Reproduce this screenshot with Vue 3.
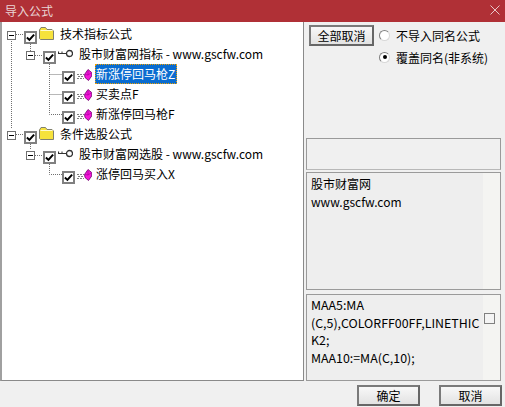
<script setup>
const rows = [
  { id: 1, depth: 0, icon: 'folder', expander: true, label: '技术指标公式' },
  { id: 2, depth: 1, icon: 'key', expander: true, label: '股市财富网指标 - www.gscfw.com' },
  { id: 3, depth: 2, icon: 'gem', label: '新涨停回马枪Z', selected: true },
  { id: 4, depth: 2, icon: 'gem', label: '买卖点F' },
  { id: 5, depth: 2, icon: 'gem', label: '新涨停回马枪F' },
  { id: 6, depth: 0, icon: 'folder', expander: true, label: '条件选股公式' },
  { id: 7, depth: 1, icon: 'key', expander: true, label: '股市财富网选股 - www.gscfw.com' },
  { id: 8, depth: 2, icon: 'gem', label: '涨停回马买入X' },
]
</script>

<template>
  <div class="win">
    <header class="title">
      <span>导入公式</span>
      <svg class="close" width="10" height="10" viewBox="0 0 10 10"><path d="M0.5 0.5L9.5 9.5M9.5 0.5L0.5 9.5" stroke="#e8c8c8" stroke-width="1" fill="none"/></svg>
    </header>
    <div class="main">
      <div class="tree">
        <svg class="lines" width="100" height="170" viewBox="0 0 100 170">
          <g stroke="#707070" stroke-dasharray="1 1" fill="none">
            <path d="M11.5 17V106"/>
            <path d="M16 12.5H24M16 112.5H24M35 33.5H43M35 133.5H43"/>
            <path d="M30.5 22V29M30.5 122V128"/>
            <path d="M49.5 42V92.5H62M49.5 52.5H62M49.5 72.5H62M49.5 142V152.5H62"/>
          </g>
        </svg>
        <div v-for="r in rows" :key="r.id" class="row" :class="'d' + r.depth">
          <span class="exp" v-if="r.expander"><i></i></span>
          <span class="chk">
            <svg width="10" height="9" viewBox="0 0 10 9"><path d="M1 4.5L3.8 7.2L9 1.2" stroke="#000" stroke-width="2.2" fill="none"/></svg>
          </span>
          <svg v-if="r.icon === 'folder'" class="ico folder" width="15" height="13" viewBox="0 0 15 13">
            <path d="M0.5 3L2 0.5H6.5L8 2.5H13L14.5 4V12.5H1.5L0.5 11.5Z" fill="#f6e23c" stroke="#808070"/>
            <path d="M1.5 3.5H13.5" stroke="#fffbd0"/>
          </svg>
          <svg v-else-if="r.icon === 'key'" class="ico key" width="15" height="9" viewBox="0 0 15 9">
            <circle cx="11.5" cy="4.5" r="3" fill="#fff" stroke="#333" stroke-width="1.3"/>
            <path d="M8.5 4.5H0.5V2.5" stroke="#333" stroke-width="1.2" fill="none"/>
            <path d="M4 4.5V2.5" stroke="#333" fill="none"/>
          </svg>
          <svg v-else class="ico gem" width="15" height="12" viewBox="0 0 15 12">
            <path d="M0 5.5H7M1 7.5H7M0 9.5H7" stroke="#808080" stroke-dasharray="2 1"/>
            <path d="M7.5 5.5L11 0.5L14.7 3.5V7L11.5 11.5L8 8.5Z" fill="#f418d8" stroke="#700070" stroke-width="0.8"/>
            <path d="M11 1.5V6M8 5.5L11 6L14 4" stroke="#b000a8" stroke-width="0.8" fill="none"/>
          </svg>
          <span class="label" :class="{ sel: r.selected }">{{ r.label }}</span>
        </div>
      </div>
      <aside class="side">
        <div class="opts">
          <button class="btn all">全部取消</button>
          <div class="radios">
            <label class="radio"><span class="dot"></span>不导入同名公式</label>
            <label class="radio"><span class="dot on"></span>覆盖同名(非系统)</label>
          </div>
        </div>
        <div class="box empty"></div>
        <div class="box info">股市财富网<br>www.gscfw.com</div>
        <div class="box code">
          <div class="code-text">MAA5:MA<br>(C,5),COLORFF00FF,LINETHIC<br>K2;<br>MAA10:=MA(C,10);</div>
          <span class="tick"></span>
        </div>
      </aside>
    </div>
    <footer class="foot">
      <button class="btn act">确定</button>
      <button class="btn act">取消</button>
    </footer>
  </div>
</template>

<style scoped>
.win {
  width: 505px;
  height: 407px;
  display: flex;
  flex-direction: column;
  background: #f0f0f0;
  font: 12px "Noto Sans CJK SC", "Noto Sans", sans-serif;
  color: #000;
  overflow: hidden;
}
.title {
  height: 22px;
  flex: none;
  background: #b03036;
  color: #e9d5d5;
  display: flex;
  align-items: center;
  justify-content: space-between;
  padding: 0 5px 2px 5px;
  box-sizing: border-box;
}
.main {
  height: 359px;
  flex: none;
  display: flex;
}
.tree {
  position: relative;
  width: 304px;
  flex: none;
  box-sizing: border-box;
  border: 1px solid #8a8a8a;
  border-top: 0;
  border-left: 2px solid #a0a0a0;
  background: #fff;
  padding-top: 2px;
}
.lines { position: absolute; left: -2px; top: 0; }
.row {
  position: relative;
  display: flex;
  align-items: center;
  height: 20px;
  box-sizing: border-box;
}
.d0 { padding-left: 5px; }
.d1 { padding-left: 24px; }
.d2 { padding-left: 60px; }
.exp {
  width: 9px;
  height: 9px;
  box-sizing: border-box;
  border: 1px solid #707070;
  background: #fff;
  display: flex;
  align-items: center;
  justify-content: center;
  margin: 2px 8px 0 0;
}
.exp i { width: 5px; height: 1px; background: #000; }
.chk {
  width: 13px;
  height: 13px;
  box-sizing: border-box;
  border: 2px solid #808080;
  background: #fff;
  display: flex;
  align-items: center;
  justify-content: center;
  margin: 7px 2px 0 0;
}
.ico { margin-right: 5px; flex: none; }
.folder { margin-top: -2px; }
.key { margin-top: -2px; }
.gem { margin: 2px 3px 0 0; }
.label { line-height: 20px; padding: 0 1px; white-space: nowrap; }
.sel { background: #0a6cd0; color: #fff; outline: 1px dotted #f0a000; outline-offset: -1px; padding-right: 2px; }
.side {
  flex: 1;
  display: flex;
  flex-direction: column;
  padding: 3px 4px 0 2px;
  min-width: 0;
}
.opts {
  height: 113px;
  flex: none;
  display: flex;
  align-items: flex-start;
  gap: 5px;
}
.btn {
  font: inherit;
  color: #000;
  background: linear-gradient(#f8f8f8, #e2e2e2);
  border: 2px solid #6a6a6a;
  border-color: #7a7a7a #666 #666 #7a7a7a;
  padding: 0;
  box-sizing: border-box;
}
.all { width: 65px; height: 21px; margin-left: 3px; }
.radios { display: flex; flex-direction: column; gap: 2px; }
.radio { display: flex; align-items: center; gap: 6px; height: 20px; }
.dot {
  width: 11px;
  height: 11px;
  box-sizing: border-box;
  border: 1px solid;
  border-color: #808080 #d8d8d8 #d8d8d8 #808080;
  border-radius: 50%;
  background: #fff;
  display: flex;
  align-items: center;
  justify-content: center;
}
.dot.on::after { content: ""; width: 4px; height: 4px; border-radius: 50%; background: #000; }
.box {
  box-sizing: border-box;
  border: 1px solid #9a9a9a;
  background: #f0f0f0;
  flex: none;
}
.empty { height: 32px; margin-bottom: 2px; border-bottom-color: #b8b8b8; }
.info {
  height: 118px;
  margin-bottom: 4px;
  padding: 2px 4px;
  line-height: 18px;
  background: linear-gradient(to right, #eeeeee 176px, #f4f4f2 176px);
}
.code {
  height: 87px;
  padding: 2px 4px;
  line-height: 17.5px;
  font-size: 12.4px;
  display: flex;
  align-items: flex-start;
  justify-content: space-between;
  background: linear-gradient(to right, #eeeeee 176px, #f4f4f2 176px);
}
.code-text { white-space: nowrap; }
.tick {
  width: 11px;
  height: 11px;
  box-sizing: border-box;
  flex: none;
  border: 1px solid #808080;
  background: #f4f4f4;
  margin: 16px 1px 0 0;
}
.foot {
  flex: 1;
  display: flex;
  justify-content: flex-end;
  align-items: flex-start;
  gap: 19px;
  padding: 4px 3px 0 0;
}
.act { width: 63px; height: 21px; }
</style>

<style>
html, body { margin: 0; background: #f0f0f0; }
</style>
